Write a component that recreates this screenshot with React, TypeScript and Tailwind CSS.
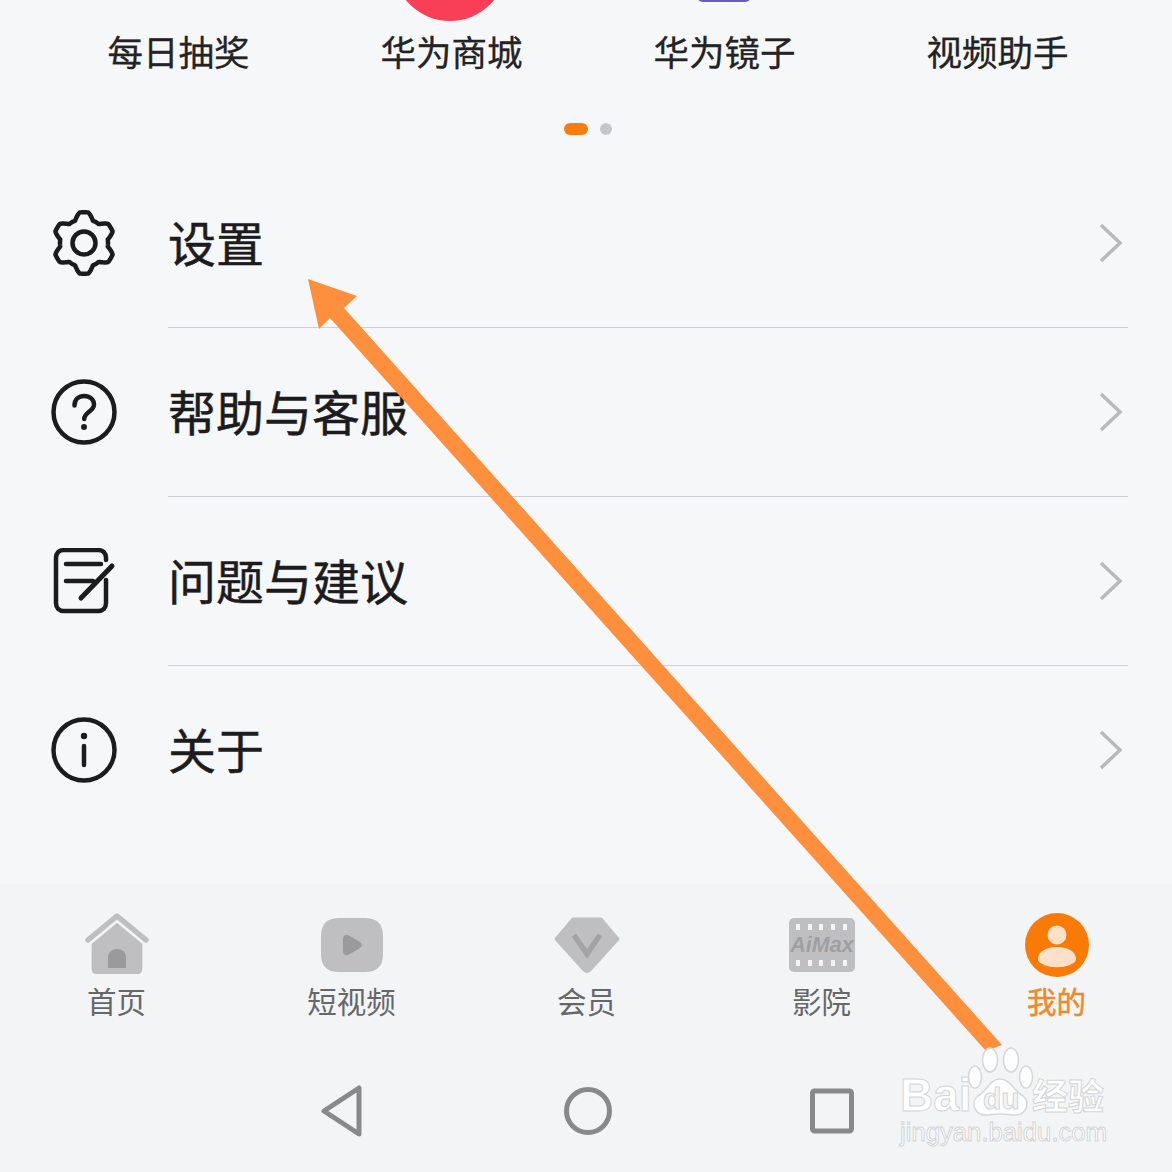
const cjk = "font-['Noto_Sans_CJK_SC','Noto_Sans',sans-serif]";

const shortcuts = ["每日抽奖", "华为商城", "华为镜子", "视频助手"];

function gearPath() {
  const pts: string[] = [];
  for (let i = 0; i < 180; i++) {
    const t = (i / 180) * Math.PI * 2;
    const c = Math.max(-1, Math.min(1, Math.cos(6 * t) * 1.5));
    const r = 27.4 + 3.4 * c;
    pts.push(`${(33 + r * Math.sin(t)).toFixed(2)} ${(33 - r * Math.cos(t)).toFixed(2)}`);
  }
  return "M" + pts.join("L") + "Z";
}

function GearIcon() {
  return (
    <svg width="66" height="66" viewBox="0 0 66 66" fill="none" stroke="#1c1c1e" strokeWidth="4.5">
      <path d={gearPath()} strokeLinejoin="round" />
      <circle cx="33" cy="33" r="11.5" />
    </svg>
  );
}

function HelpIcon() {
  return (
    <svg width="66" height="66" viewBox="0 0 66 66" fill="none" stroke="#1c1c1e" strokeWidth="4.5" strokeLinecap="round">
      <circle cx="33" cy="33" r="30.500" />
      <path d="M23.5 26.5c0-6 4.300-9.500 9.800-9.500 5.600 0 9.700 3.500 9.700 8.500 0 7-9.800 7.500-9.800 14.500" />
      <circle cx="33" cy="48" r="3" fill="#1c1c1e" stroke="none" />
    </svg>
  );
}

function NoteIcon() {
  return (
    <svg width="66" height="66" viewBox="0 0 66 66" fill="none" stroke="#1c1c1e" strokeWidth="4.5" strokeLinecap="round">
      <path d="M55 12V10C55 5 52 2 47 2H13C8 2 5 5 5 10V55C5 60 8 63 13 63H47C52 63 55 60 55 55V32" />
      <path d="M15 16H50M15 33H42" />
      <path d="M61 18L30 50" strokeWidth="5" />
    </svg>
  );
}

function InfoIcon() {
  return (
    <svg width="66" height="66" viewBox="0 0 66 66" fill="none" stroke="#1c1c1e" strokeWidth="4.5" strokeLinecap="round">
      <circle cx="33" cy="33" r="30.500" />
      <path d="M33 29V48" />
      <circle cx="33" cy="19" r="3.200" fill="#1c1c1e" stroke="none" />
    </svg>
  );
}

const menu = [
  { label: "设置", icon: <GearIcon /> },
  { label: "帮助与客服", icon: <HelpIcon /> },
  { label: "问题与建议", icon: <NoteIcon /> },
  { label: "关于", icon: <InfoIcon /> },
];

function HomeTab() {
  return (
    <svg width="66" height="66" viewBox="0 0 66 66">
      <path d="M5 30L33 6L61 30V57C61 60 59 62 56 62H10C7 62 5 60 5 57Z" transform="translate(3.100 0) scale(0.906 1)" fill="#bfbfc1" />
      <path d="M4 30.500L33 6.500L62 30.500" transform="translate(0 -1.500)" fill="none" stroke="#f3f4f6" strokeWidth="9" />
      <path d="M4 28L33 4L62 28" fill="none" stroke="#bfbfc1" strokeWidth="5.500" strokeLinecap="round" strokeLinejoin="round" />
      <path d="M24 56V46C24 40 28 37 33 37C38 37 42 40 42 46V56Z" fill="#9a9a9c" />
    </svg>
  );
}

function VideoTab() {
  return (
    <svg width="66" height="66" viewBox="0 0 66 66">
      <path d="M2 24C2 12 8 6 20 6H46C58 6 64 12 64 24V42C64 54 58 60 46 60H20C8 60 2 54 2 42Z" fill="#bfbfc1" />
      <path d="M24 27C24 23 27 22 30 23.500L41 30C43.500 31.500 43.500 34.500 41 36L30 42.500C27 44 24 43 24 39Z" fill="#9a9a9c" />
    </svg>
  );
}

function VipTab() {
  return (
    <svg width="66" height="66" viewBox="0 0 66 66">
      <path d="M19 7H47L64 27L36 58C34 60 32 60 30 58L2 27Z" fill="#bfbfc1" strokeLinejoin="round" stroke="#bfbfc1" strokeWidth="3" />
      <path d="M20 23L33 42L46 23" fill="none" stroke="#a3a3a5" strokeWidth="5.500" />
    </svg>
  );
}

function CinemaTab() {
  const holes = [7, 19, 30, 42, 54];
  return (
    <svg width="66" height="66" viewBox="0 0 66 66">
      <rect x="0" y="6" width="66" height="54" rx="5" fill="#bfbfc1" />
      {holes.map((x) => (
        <g key={x} fill="#f3f4f6">
          <rect x={x} y="12" width="4" height="6" />
          <rect x={x} y="48" width="4" height="6" />
        </g>
      ))}
      <text x="33" y="39.500" textAnchor="middle" fontFamily="Liberation Sans, sans-serif" fontSize="21.500" fontWeight="700" fontStyle="italic" fill="#a0a0a2">
        AiMax
      </text>
    </svg>
  );
}

function MeTab() {
  return (
    <svg width="66" height="66" viewBox="0 0 66 66">
      <circle cx="33" cy="33" r="32" fill="#f97b06" />
      <circle cx="33" cy="23" r="9.500" fill="#fde0c9" />
      <path d="M14 47C14 39 23 35 33 35C43 35 52 39 52 47C52 50 49 51 46 53C38 56 28 56 20 53C17 51 14 50 14 47Z" fill="#fde0c9" />
    </svg>
  );
}

const tabs = [
  { label: "首页", icon: <HomeTab /> },
  { label: "短视频", icon: <VideoTab /> },
  { label: "会员", icon: <VipTab /> },
  { label: "影院", icon: <CinemaTab /> },
  { label: "我的", icon: <MeTab />, active: true },
];

export default function App() {
  return (
    <div className={`relative h-[1172px] w-[1172px] overflow-hidden bg-[#f6f7f9] ${cjk}`}>
      {/* cut-off shortcut icons at the top edge */}
      <div className="absolute left-[393px] top-[-93px] h-[114px] w-[114px] rounded-full bg-[#f93f58]" />
      <div className="absolute left-[697px] top-[-40px] h-[42px] w-[54px] rounded-[6px] bg-[#6a5ac4]" />

      <div className="grid h-[104px] grid-cols-[repeat(4,273px)] items-center pl-[42px]">
        {shortcuts.map((s) => (
          <div key={s} className="relative pb-[3px] text-center text-[35.500px] leading-[48px] text-[#232325] [-webkit-text-stroke:0.3px_#232325]">
            {s}
          </div>
        ))}
      </div>

      <div className="mt-[19px] flex h-[12px] items-center justify-center gap-[12px] pl-[4px]">
        <div className="h-[12px] w-[24px] rounded-full bg-[#f97d0b]" />
        <div className="h-[12px] w-[12px] rounded-full bg-[#c4c7ca]" />
      </div>

      <div className="mt-[24px] flex h-[676px] flex-col">
        {menu.map((m, i) => (
          <div key={m.label} className="flex h-[169px] items-stretch">
            <div className="flex w-[168px] items-center pb-[2px] pl-[51px]">{m.icon}</div>
            <div
              className={`mr-[44px] flex flex-1 items-center justify-between border-b ${
                i < menu.length - 1 ? "border-[#cfd0d3]" : "border-transparent"
              }`}
            >
              <span className="pb-[5px] text-[48px] leading-[60px] text-[#1c1c1e] [-webkit-text-stroke:0.5px_#1c1c1e]">{m.label}</span>
              <svg width="24" height="40" viewBox="0 0 24 40" fill="none" stroke="#b8b9bb" strokeWidth="3.500" className="mr-[5px]">
                <path d="M2 2L21 20L2 38" />
              </svg>
            </div>
          </div>
        ))}
      </div>

      <div className="absolute bottom-0 left-0 right-0 h-[288px] bg-[#f3f4f6]">
        <div className="-ml-[1px] flex pt-[28px]">
          {tabs.map((t) => (
            <div key={t.label} className="flex w-[235px] shrink-0 flex-col items-center">
              {t.icon}
              <span
                className={`pb-[3px] text-[29.500px] leading-[45px] ${
                  t.active ? "text-[#ee8a2a] [-webkit-text-stroke:0.5px_#ee8a2a]" : "text-[#666769]"
                }`}
              >
                {t.label}
              </span>
            </div>
          ))}
        </div>
        <div className="mt-[24px] flex h-[122px] items-center justify-center gap-[185px] pl-[4px]">
          <svg width="60" height="60" viewBox="0 0 60 60" fill="none" stroke="#88898b" strokeWidth="5" strokeLinejoin="round">
            <path d="M11 30L46 7V53Z" />
          </svg>
          <svg width="60" height="60" viewBox="0 0 60 60" fill="none" stroke="#88898b" strokeWidth="5">
            <circle cx="30" cy="30" r="21.500" />
          </svg>
          <svg width="60" height="60" viewBox="0 0 60 60" fill="none" stroke="#88898b" strokeWidth="5" strokeLinejoin="round">
            <rect x="9.500" y="10" width="39" height="40" rx="2" />
          </svg>
        </div>
      </div>

      {/* annotation arrow drawn over the screenshot */}
      <svg className="absolute inset-0" width="1172" height="1172" viewBox="0 0 1172 1172">
        <path d="M308 279L357 296L344 308L1002 1045L986 1051L330 318L319 329Z" fill="#fe8f3c" />
      </svg>

      {/* watermark */}
      <div className="absolute left-[898px] top-[1044px] h-[110px] w-[215px] font-['Liberation_Sans',sans-serif] text-white">
        <svg className="absolute left-[70px] top-[2px]" width="66" height="72" viewBox="0 0 66 72" fill="#ffffff" fillOpacity="0.85" stroke="#d6d7d9" strokeWidth="1.500">
          <ellipse cx="22" cy="14" rx="7.500" ry="12" />
          <ellipse cx="43" cy="14" rx="7.500" ry="12" />
          <ellipse cx="7" cy="31" rx="6.500" ry="11" />
          <ellipse cx="58" cy="31" rx="6.500" ry="11" />
          <path d="M32 33C22 33 20 44 10 50C2 56 6 70 20 69C26 68 38 68 45 69C60 70 62 55 55 50C45 44 42 33 32 33Z" />
        </svg>
        <span className="absolute left-[2px] top-[28px] text-[46px] font-bold leading-[46px] [-webkit-text-stroke:1px_#d4d5d7]">Bai</span>
        <span className="absolute left-[85px] top-[39px] text-[30px] font-bold leading-[32px] text-[#f3f4f6] [-webkit-text-stroke:1px_#d4d5d7]">du</span>
        <span className={`absolute left-[134px] top-[30px] text-[36px] font-bold leading-[40px] [-webkit-text-stroke:1px_#d4d5d7] ${cjk}`}>经验</span>
        <span className="absolute left-[2px] top-[74px] text-[25.700px] leading-[28px] [-webkit-text-stroke:1px_#d4d5d7]">jingyan.baidu.com</span>
      </div>
    </div>
  );
}
